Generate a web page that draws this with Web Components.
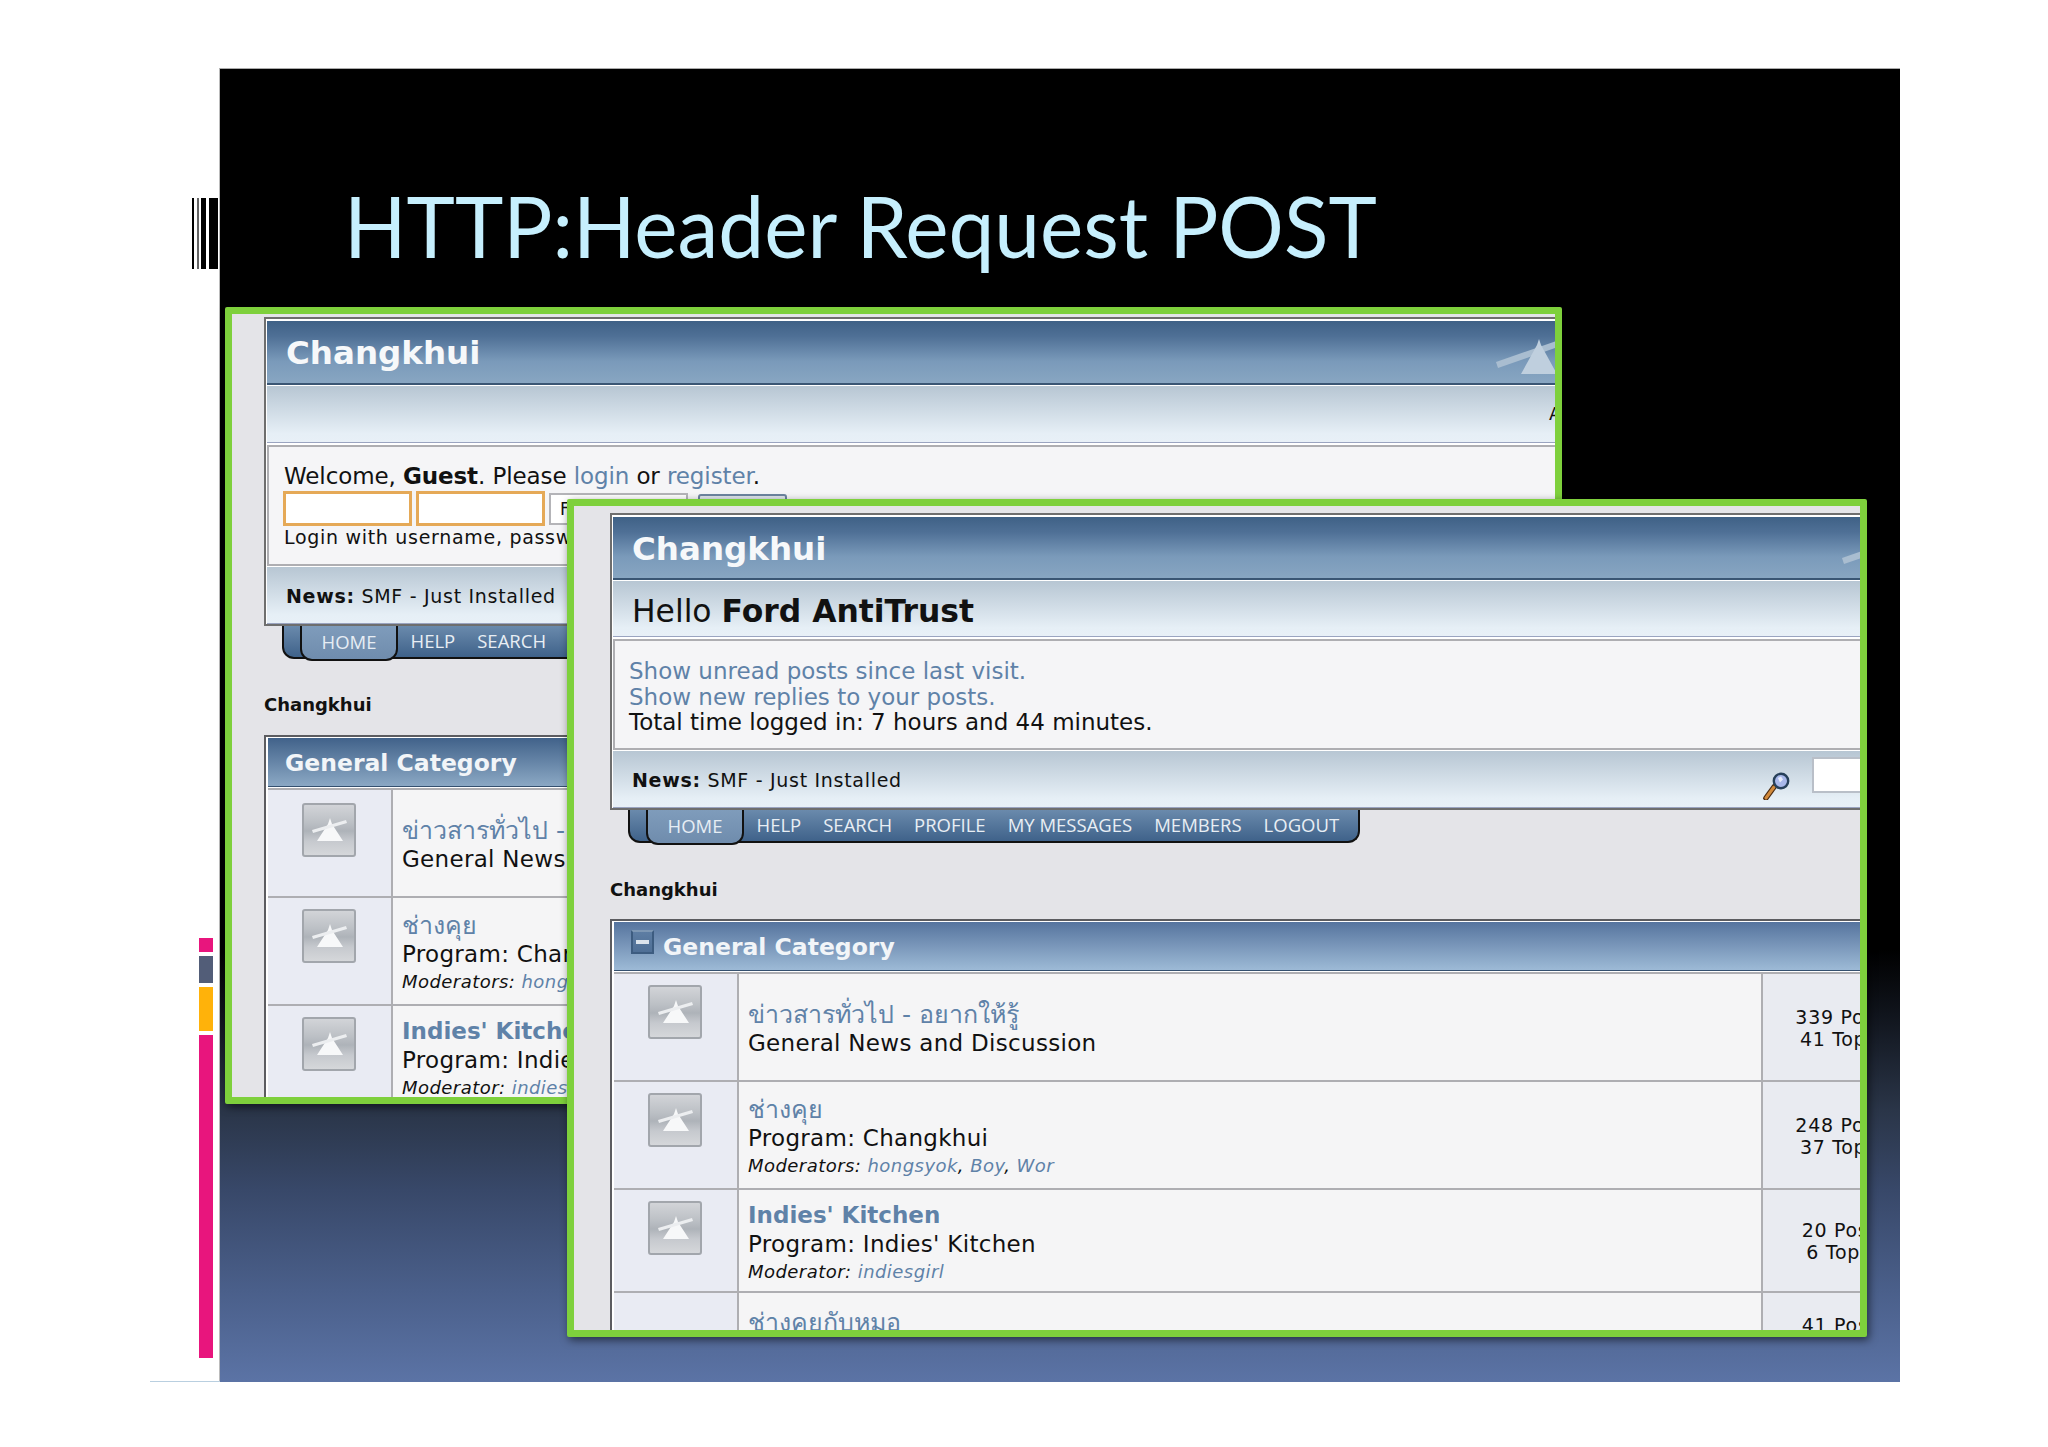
<!DOCTYPE html>
<html><head><meta charset="utf-8"><title>HTTP:Header Request POST</title>
<style>html,body{margin:0;padding:0;background:#fff;height:1447px;overflow:hidden}</style>
</head><body>
<slide-page>
  <span slot="title">HTTP:Header Request POST</span>

  <forum-window style="--x:5px;--y:238px;--w:1337px;--h:797px;--pl:32px;--pt:3px;--t:62px;--s:56px;--b:117px;--n:56px;--cat-a:#41628a;--cat-b:#8ba8c4;z-index:1">
    <forum-head style="--hello-pt:0px">
      <span slot="title">Changkhui</span>
      <span slot="sub" style="margin-left:1263px;font:18px/20px 'DejaVu Sans',sans-serif;color:#111">A</span>
      <welcome-box style="--pad:17px;--wl:15px;letter-spacing:-.1px">
        Welcome, <b>Guest</b>. Please <forum-link>login</forum-link> or <forum-link>register</forum-link>.
        <login-row slot="extra"></login-row>
        <span slot="hint">Login with username, passw</span>
      </welcome-box>
      <span slot="news"><b>News:</b> SMF - Just Installed</span>
    </forum-head>
    <forum-nav style="--nav-l:18px;--nav-pr:300px">
      <nav-item home>HOME</nav-item><nav-item>HELP</nav-item><nav-item>SEARCH</nav-item>
    </forum-nav>
    <forum-crumb style="margin:34px 0 18px">Changkhui</forum-crumb>
    <forum-cat style="--hh:48px">
      <span slot="title">General Category</span>
      <board-row style="--h:106px;--ip:13px">
        <span slot="title"><forum-link>ข่าวสารทั่วไป - อยากให้รู้</forum-link></span>
        <span slot="desc">General News and Discussion</span>
      </board-row>
      <board-row style="--h:106px;--ip:11px">
        <span slot="title"><forum-link>ช่างคุย</forum-link></span>
        <span slot="desc">Program: Changkhui</span>
        <span slot="mods">Moderators: <forum-link>hongsyok</forum-link>, <forum-link>Boy</forum-link>, <forum-link>Wor</forum-link></span>
      </board-row>
      <board-row style="--h:101px;--ip:11px">
        <span slot="title"><forum-link style="font-size:23px"><b>Indies' Kitchen</b></forum-link></span>
        <span slot="desc">Program: Indies' Kitchen</span>
        <span slot="mods">Moderator: <forum-link>indiesgirl</forum-link></span>
      </board-row>
    </forum-cat>
  </forum-window>

  <forum-window style="--x:347px;--y:430px;--w:1300px;--h:838px;--pl:36px;--pt:7px;--t:61px;--s:55px;--b:107px;--n:56px;--cat-a:#56749e;--cat-b:#9dbad6;z-index:2">
    <forum-head style="--hello-pt:5px">
      <span slot="title">Changkhui</span>
      <span slot="sub">Hello <b>Ford AntiTrust</b></span>
      <welcome-box style="--pad:18px">
        <forum-link>Show unread posts since last visit.</forum-link><br>
        <forum-link>Show new replies to your posts.</forum-link><br>
        Total time logged in: 7 hours and 44 minutes.
      </welcome-box>
      <span slot="news"><b>News:</b> SMF - Just Installed</span>
      <search-tools slot="tools"></search-tools>
    </forum-head>
    <forum-nav style="--nav-l:18px;--nav-pr:8px">
      <nav-item home>HOME</nav-item><nav-item>HELP</nav-item><nav-item>SEARCH</nav-item><nav-item>PROFILE</nav-item><nav-item>MY MESSAGES</nav-item><nav-item>MEMBERS</nav-item><nav-item>LOGOUT</nav-item>
    </forum-nav>
    <forum-crumb style="margin:35px 0 17px">Changkhui</forum-crumb>
    <forum-cat style="--hh:48px">
      <collapse-icon slot="icon"></collapse-icon>
      <span slot="title">General Category</span>
      <board-row style="--h:106px;--ip:11px">
        <span slot="title"><forum-link>ข่าวสารทั่วไป - อยากให้รู้</forum-link></span>
        <span slot="desc">General News and Discussion</span>
        <span slot="stat">339 Posts<br><stat-line>41 Topics</stat-line></span>
      </board-row>
      <board-row style="--h:106px;--ip:11px">
        <span slot="title"><forum-link>ช่างคุย</forum-link></span>
        <span slot="desc">Program: Changkhui</span>
        <span slot="mods">Moderators: <forum-link>hongsyok</forum-link>, <forum-link>Boy</forum-link>, <forum-link>Wor</forum-link></span>
        <span slot="stat">248 Posts<br><stat-line>37 Topics</stat-line></span>
      </board-row>
      <board-row style="--h:101px;--ip:11px">
        <span slot="title"><forum-link style="font-size:23px"><b>Indies' Kitchen</b></forum-link></span>
        <span slot="desc">Program: Indies' Kitchen</span>
        <span slot="mods">Moderator: <forum-link>indiesgirl</forum-link></span>
        <span slot="stat">20 Posts<br><stat-line>6 Topics</stat-line></span>
      </board-row>
      <board-row style="--h:84px;--ip:11px;--icon:hidden">
        <span slot="title"><forum-link>ช่างคุยกับหมอ</forum-link></span>
        <span slot="desc">&nbsp;</span>
        <span slot="stat">41 Posts<br>&nbsp;</span>
      </board-row>
    </forum-cat>
  </forum-window>
</slide-page>

<script>
const BODY = "'DejaVu Sans',sans-serif";
function def(name, html) {
  customElements.define(name, class extends HTMLElement {
    constructor() { super(); this.attachShadow({mode:'open'}).innerHTML = html; }
  });
}
def('slide-page', `<style>
:host{display:block;position:relative;margin:68px 0 0 219px;width:1681px;height:1314px;box-sizing:border-box;
 background:linear-gradient(180deg,#000 0,#000 880px,#10141c 945px,#2a3548 1041px,#384869 1121px,#4a5f8a 1221px,#5b73a5 1312px);
 border-top:1px solid #aaa;border-left:1px solid #bbb}
h1{margin:0;padding:101px 0 0 124px;font:400 85px/110px Lato,sans-serif;color:#c6effd;white-space:nowrap;transform-origin:124px 0;transform:scaleX(.964)}
.bars{position:absolute;left:-28px;top:129px;width:27px;height:71px;display:flex}
.bars i{display:block;height:100%;background:#000}
.side{position:absolute;left:-21px;top:869px;width:14px;height:420px;display:flex;flex-direction:column;gap:4px}
.side i{display:block}
.rule{position:absolute;left:-70px;bottom:0;width:70px;height:1px;background:#b9cfe0}
</style>
<h1><slot name="title"></slot></h1>
<div class="bars"><i style="width:2px"></i><i style="width:3px;background:#fff"></i><i style="width:2px;background:#666"></i><i style="width:2px;background:#fff"></i><i style="width:5px"></i><i style="width:3px;background:#fff"></i><i style="width:9px"></i></div>
<div class="side"><i style="height:14px;background:#e8157d"></i><i style="height:27px;background:#525d78"></i><i style="height:44px;background:#ffb20a"></i><i style="flex:1;background:#e8157d"></i></div>
<div class="rule"></div>
<slot></slot>`);
def('forum-window', `<style>
:host{display:block;position:absolute;left:var(--x);top:var(--y);width:var(--w);height:var(--h);box-sizing:border-box;
 border:7px solid #7ed03c;border-radius:2px;background:#e4e4e8;overflow:hidden;padding:var(--pt) 0 0 var(--pl);
 box-shadow:2px 3px 9px rgba(0,0,0,.55);color:#111;font-family:${BODY}}
.in{width:1400px}
</style><div class="in"><slot></slot></div>`);
def('forum-head', `<style>
:host{display:block;box-sizing:border-box;border:solid #6e6e6e;border-width:2px 0 2px 2px;padding:2px 0 0 1px;background:#fff}
.title{position:relative;box-sizing:border-box;height:calc(var(--t) + 2px);border-bottom:2px solid #3a5674;padding:2px 0 0 19px;display:flex;align-items:center;
 background:linear-gradient(180deg,#3f6186 0,#4f7096 25%,#7a9aba 65%,#88a6c2 100%);color:#f6f8fa;font:700 32.5px 'DejaVu Sans',sans-serif}
.title svg{position:absolute;left:1229px;top:0;width:88px;height:60px}
.sub{box-sizing:border-box;height:calc(var(--s) + 1px);margin-top:1px;border-bottom:1px solid #9aa4c0;padding:var(--hello-pt) 0 0 19px;display:flex;align-items:center;
 background:linear-gradient(180deg,#b7c6d3 0,#e6eff6 85%,#e8f0f7 100%);font:31.4px ${BODY};color:#111;white-space:pre}
.body{height:var(--b);margin-top:2px;border:solid #aeaeb2;border-width:2px 0 2px 2px;background:#f5f5f7;box-sizing:content-box}
.news{box-sizing:border-box;height:calc(var(--n) + 1px);margin-top:1px;border-bottom:1px solid #9aa4c0;padding:2px 0 0 19px;display:flex;align-items:center;gap:0;position:relative;
 background:linear-gradient(180deg,#b7c6d3 0,#e6eff6 85%,#e8f0f7 100%);font:19px 'DejaVu Sans',sans-serif;letter-spacing:.7px}
</style>
<div class="title"><slot name="title"></slot><svg viewBox="0 0 88 60"><path d="M0 41 L2 47 L88 17 L86 11Z" fill="#a9bdd0"/><path d="M41 24 L43 18 L45 24 L61 53 L25 53Z" fill="#bfcfde"/></svg></div>
<div class="sub"><slot name="sub"></slot></div>
<div class="body"><slot></slot></div>
<div class="news"><slot name="news"></slot><slot name="tools"></slot></div>`);
def('welcome-box', `<style>
:host{display:block;padding:var(--pad,16px) 0 0 var(--wl,14px);font:23px/25.5px ${BODY};color:#111}
.hint{font:19px/22px 'DejaVu Sans',sans-serif;letter-spacing:.7px;margin-top:-1px;white-space:nowrap}
</style><slot></slot><slot name="extra"></slot><div class="hint"><slot name="hint"></slot></div>`);
def('forum-link', `<style>:host{color:#5f82a8}</style><slot></slot>`);
def('stat-line', `<style>:host{display:inline-block;padding-left:5px}</style><slot></slot>`);
def('login-row', `<style>
:host{display:flex;gap:4px;margin:1px 0 0 -1px;height:36px;align-items:flex-start}
i{display:block;box-sizing:border-box;width:129px;height:35px;border:3px solid #e5a957;background:#fff}
.s{width:139px;height:32px;margin:2px 0 0 0;border:2px solid #b4b4b8;background:#fff;font:17px/28px 'DejaVu Sans',sans-serif;font-style:normal;padding-left:9px;color:#111;box-sizing:border-box}
.b{width:89px;height:30px;margin:3px 0 0 6px;border:2px solid #6d85a0;border-radius:3px;background:#dfe5ec;box-sizing:border-box}
</style><i></i><i></i><div class="s">Forever</div><div class="b"></div>`);
def('search-tools', `<style>
:host{position:absolute;left:1150px;top:6px;display:flex;align-items:flex-start;gap:22px}
svg{margin-top:15px;display:block}
i{display:block;width:120px;height:36px;box-sizing:border-box;border:2px solid #b9bfc8;background:#fff}
</style><svg width="27" height="28" viewBox="0 0 27 28"><path d="M3 26 L11 15" stroke="#4a2a10" stroke-width="5.5" stroke-linecap="round"/><path d="M3 26 L11 15" stroke="#d28a3c" stroke-width="3" stroke-linecap="round"/><circle cx="18" cy="9" r="7.2" fill="#a9b8ea" stroke="#27405a" stroke-width="2.4"/><path d="M15 6 l3 -1.5 l2 3 l-3 3z" fill="#e8edfb"/></svg><i></i>`);
def('forum-nav', `<style>
:host{display:flex;width:fit-content;position:relative;height:33px;box-sizing:border-box;border:solid #111;border-width:0 2px 2px 2px;border-radius:0 0 12px 12px;margin-left:var(--nav-l);padding-right:var(--nav-pr);
 background:linear-gradient(180deg,#6a8aac 0,#3f628a 100%);color:#e8eef4;font:18px 'Open Sans',sans-serif}
.l{width:16px;flex:none}
</style><div class="l"></div><slot></slot>`);
def('nav-item', `<style>
:host{display:flex;align-items:center;padding:0 11px 3px;font-size:18.5px;white-space:nowrap}
:host([home]){background:linear-gradient(180deg,#7f9cbb 0,#6f8cad 100%);box-sizing:border-box;width:98px;height:35px;margin:0 1.5px 0 0;justify-content:center;padding:0 0 2px;border:solid #111;border-width:0 2px 2px 2px;border-radius:0 0 12px 12px;color:#e6edf4}
</style><slot></slot>`);
def('forum-crumb', `<style>:host{display:block;font:700 18px/24px 'DejaVu Sans',sans-serif;color:#111}</style><slot></slot>`);
def('forum-cat', `<style>
:host{display:block;border:solid #5c5c60;border-width:2px 0 0 2px;padding:1px 0 0 2px;background:#fff}
.h{box-sizing:border-box;height:calc(var(--hh) + 1px);border-bottom:1px solid #34506f;display:flex;align-items:center;gap:9px;padding:1px 0 0 17px;
 background:linear-gradient(180deg,var(--cat-a),var(--cat-b));color:#f2f5f8;font:700 23.5px 'DejaVu Sans',sans-serif}
.r{margin-top:1px;border-top:2px solid #aeaeb2}
</style><div class="h"><slot name="icon"></slot><slot name="title"></slot></div><div class="r"><slot></slot></div>`);
def('collapse-icon', `<style>
:host{display:block;width:23px;height:24px;box-sizing:border-box;border:2px solid #3d5c80;border-top-color:#7d97b4;background:linear-gradient(180deg,#5d7da3,#4f6f96);position:relative;margin-top:-9px}
i{position:absolute;left:3px;right:3px;top:8px;height:4px;background:#dbe3ec}
</style><i></i>`);
def('board-row', `<style>
:host{display:grid;grid-template-columns:125px 1024px 163px;height:var(--h);border-bottom:2px solid #aeaeb2;box-sizing:content-box}
.ic{background:#e9ebf3;border-right:2px solid #aeaeb2;padding:var(--ip) 0 0 34px}
forum-icon{visibility:var(--icon,visible)}
.m{background:#f5f5f6;display:flex;flex-direction:column;justify-content:center;padding:3px 0 0 9px;white-space:nowrap;border-right:2px solid #aeaeb2}
.s{background:#e9ebf1;display:flex;align-items:center;justify-content:center;text-align:center;font:19px/22px 'DejaVu Sans',sans-serif;letter-spacing:.7px;padding-top:1px}
::slotted([slot=title]){font:25px/29px ${BODY}}
::slotted([slot=desc]){font:23px/29px ${BODY};letter-spacing:.3px}
::slotted([slot=mods]){font:italic 18px/25px 'DejaVu Sans',sans-serif;letter-spacing:.45px}
</style>
<div class="ic"><forum-icon></forum-icon></div>
<div class="m"><slot name="title"></slot><slot name="desc"></slot><slot name="mods"></slot></div>
<div class="s"><slot name="stat"></slot></div>`);
def('forum-icon', `<style>
:host{display:block;width:54px;height:54px;box-sizing:border-box;border:2px solid #a2a6ac;border-radius:3px;position:relative;
 background:linear-gradient(180deg,#d2d4d8 0,#bcc0c5 35%,#aeb3b9 52%,#c6c9ce 72%,#d5d7da 100%)}
svg{position:absolute;left:-2px;top:-2px;width:54px;height:54px}
</style><svg viewBox="0 0 54 54"><path d="M28 15 L30 21 L41 38 L15 38 L26 21Z" fill="#f7f8f9"/><path d="M10 27 L11 30 L45 20 L44 17Z" fill="#eceef0"/></svg>`);
</script>
</body></html>
